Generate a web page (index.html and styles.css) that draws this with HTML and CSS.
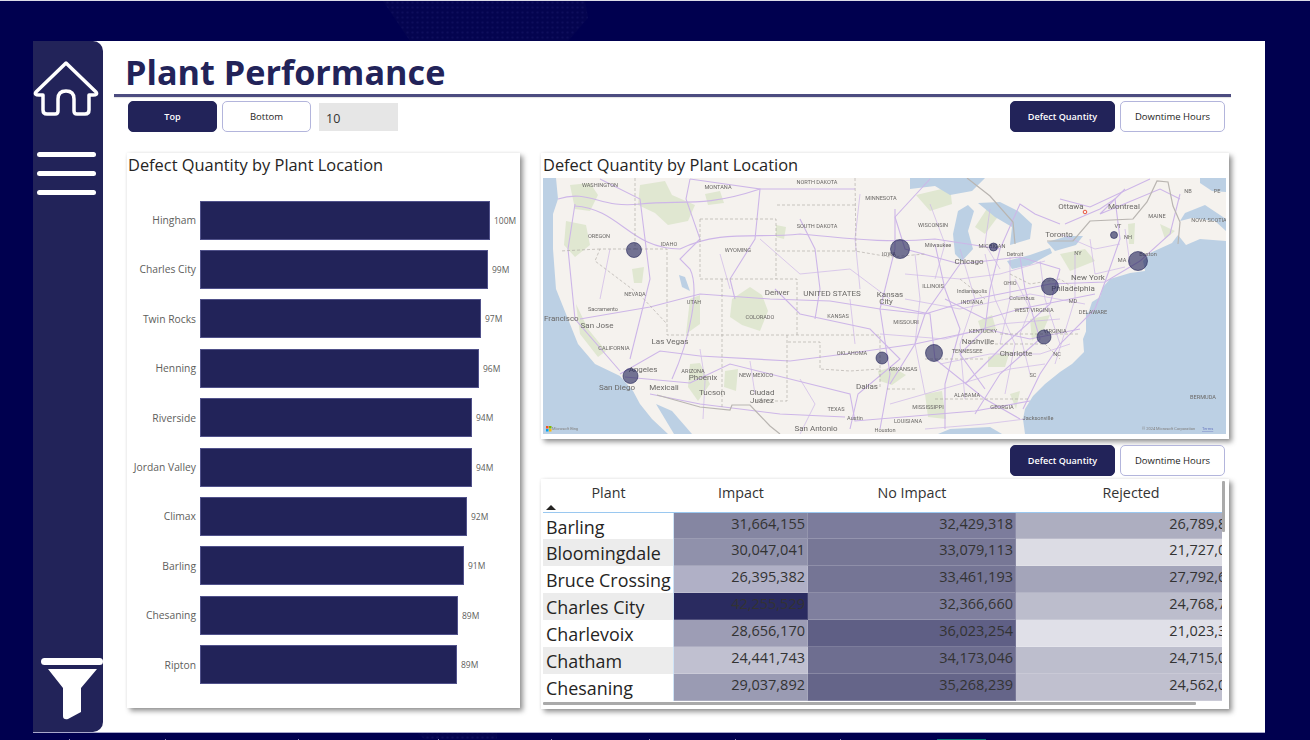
FILE: index.html
```html
<!DOCTYPE html>
<html lang="en">
<head>
<meta charset="utf-8">
<title>Plant Performance</title>
<link rel="stylesheet" href="styles.css">
</head>
<body>
<svg class="backdrop" viewBox="0 0 1310 740">
  <defs><pattern id="dots" width="5" height="5" patternUnits="userSpaceOnUse"><rect width="5" height="5" fill="#04044f"/><circle cx="2.500" cy="2.500" r="1.100" fill="#0e0e5c"/></pattern></defs>
  <path d="M383 1 H585 L588 18 L568 41 H410 Z" fill="url(#dots)"/>
  <path d="M418 733 H497 V739 H424 Z" fill="url(#dots)"/>
</svg>
<div class="floorline"></div>
<div class="canvas">
  <aside class="rail">
    <svg class="ico-home" viewBox="0 0 66 56"><path d="M33 2 L63 31 Q65 34 60 34 H56 V49 Q56 53 52 53 H44 Q41 53 41 50 V38 Q41 30 33 30 Q25 30 25 38 V50 Q25 53 22 53 H14 Q10 53 10 49 V34 H6 Q1 34 3 31 Z"/></svg>
    <div class="burger"><span></span><span></span><span></span></div>
    <svg class="ico-filter" viewBox="0 0 62 62"><rect x="0" y="0" width="62" height="7" rx="3.500" class="lid"/><path d="M7 11 H56 L40 30 V54 L27 61 Q22 62 22 58 V30 Z" class="cone"/></svg>
  </aside>
  <main class="main">
    <h1 class="title">Plant Performance</h1>
    <div class="rule"></div>
    <div class="toolbar">
      <div class="group">
        <button class="btn on wide">Top</button>
        <button class="btn wide">Bottom</button>
        <div class="topn">10</div>
      </div>
      <div class="group">
        <button class="btn on">Defect Quantity</button>
        <button class="btn">Downtime Hours</button>
      </div>
    </div>
    <div class="content">
      <section class="card barcard">
        <h2 class="card-title">Defect Quantity by Plant Location</h2>
        <div class="bars">
          <div class="bar-row"><span class="bar-label">Hingham</span><div class="bar" style="width:290px"></div><span class="bar-value">100M</span></div>
          <div class="bar-row"><span class="bar-label">Charles City</span><div class="bar" style="width:288px"></div><span class="bar-value">99M</span></div>
          <div class="bar-row"><span class="bar-label">Twin Rocks</span><div class="bar" style="width:281px"></div><span class="bar-value">97M</span></div>
          <div class="bar-row"><span class="bar-label">Henning</span><div class="bar" style="width:279px"></div><span class="bar-value">96M</span></div>
          <div class="bar-row"><span class="bar-label">Riverside</span><div class="bar" style="width:272px"></div><span class="bar-value">94M</span></div>
          <div class="bar-row"><span class="bar-label">Jordan Valley</span><div class="bar" style="width:272px"></div><span class="bar-value">94M</span></div>
          <div class="bar-row"><span class="bar-label">Climax</span><div class="bar" style="width:267px"></div><span class="bar-value">92M</span></div>
          <div class="bar-row"><span class="bar-label">Barling</span><div class="bar" style="width:264px"></div><span class="bar-value">91M</span></div>
          <div class="bar-row"><span class="bar-label">Chesaning</span><div class="bar" style="width:258px"></div><span class="bar-value">89M</span></div>
          <div class="bar-row"><span class="bar-label">Ripton</span><div class="bar" style="width:257px"></div><span class="bar-value">89M</span></div>
        </div>
      </section>
      <div class="rightcol">
        <section class="card mapcard">
          <h2 class="card-title flush">Defect Quantity by Plant Location</h2>
          <svg class="map" viewBox="543 179 683 256" preserveAspectRatio="none">
            <rect class="land" x="543" y="179" width="683" height="256"/>
            <g class="green">
              <path d="M570 186 L590 184 L598 196 L590 212 L575 210 Z"/>
              <path d="M640 186 L665 182 L672 196 L695 206 L688 222 L668 226 L655 214 L638 206 Z"/>
              <path d="M566 222 L586 226 L590 246 L575 258 L564 246 Z"/>
              <path d="M705 195 L720 192 L724 204 L708 206 Z"/>
              <path d="M776 226 L786 228 L784 240 L776 238 Z"/>
              <path d="M732 300 L750 288 L762 296 L768 312 L760 332 L742 326 L730 318 Z"/>
              <path d="M576 305 L588 330 L606 352 L598 358 L580 335 Z"/>
              <path d="M690 365 L700 364 L710 385 L698 402 L688 388 Z"/>
              <path d="M725 372 L738 370 L736 392 L724 388 Z"/>
              <path d="M632 270 L644 268 L642 284 L634 284 Z"/>
              <path d="M690 300 L700 296 L700 325 L686 335 Z"/>
              <path d="M990 205 L1000 215 L985 235 L975 228 Z"/>
              <path d="M916 196 L950 188 L952 205 L930 212 Z"/>
              <path d="M1030 320 L1050 316 L1044 330 L1032 342 Z"/>
              <path d="M988 358 L1010 352 L1005 368 L988 368 Z"/>
              <path d="M978 322 L992 316 L996 330 L982 334 Z"/>
              <path d="M925 395 L942 392 L946 420 L928 418 Z"/>
              <path d="M1128 225 L1135 224 L1134 245 L1129 245 Z"/>
              <path d="M1175 232 L1165 240 L1160 225 Z"/>
              <path d="M1010 395 L1020 392 L1016 410 Z"/>
              <path d="M878 372 L892 368 L906 376 L892 386 L880 382 Z"/>
              <path d="M1060 255 L1085 250 L1095 262 L1070 272 Z"/>
            </g>
            <g class="water">
              <path d="M543 179 H556 L558 200 L553 215 L553 250 L556 290 L570 325 L578 345 L595 365 L620 377 L633 392 L640 405 L652 420 L668 435 H543 Z"/>
              <path d="M656 405 L672 412 L692 435 L674 435 Z"/>
              <path d="M1226 242 L1200 240 L1186 246 L1178 236 L1172 244 L1150 254 L1143 262 L1145 272 L1130 274 L1110 280 L1103 288 L1100 298 L1092 303 L1088 315 L1087 330 L1083 340 L1084 353 L1072 365 L1060 373 L1045 385 L1033 397 L1025 410 L1023 420 L1025 435 H1226 Z"/>
              <path d="M1180 222 L1192 219 L1215 222 L1226 232 V220 L1205 206 L1185 214 Z"/>
              <path d="M1200 179 H1226 V193 L1212 192 L1200 184 Z"/>
              <path d="M938 435 L950 430 L990 428 L1002 435 Z"/>
              <path d="M910 179 H985 L972 192 L950 196 L935 187 L910 190 Z"/>
              <path d="M958 212 L968 206 L974 212 L968 232 L973 250 L962 262 L955 255 L953 235 Z"/>
              <path d="M978 204 L1000 203 L1018 212 L1032 225 L1030 240 L1010 246 L1012 228 L995 218 Z"/>
              <path d="M1007 262 L1030 256 L1050 249 L1052 254 L1030 266 L1012 270 Z"/>
              <path d="M1047 243 L1068 237 L1083 237 L1076 246 L1055 252 Z"/>
              <path d="M1086 312 L1092 318 L1090 340 L1086 335 Z"/>
              <path d="M679 276 L685 278 L690 292 L682 288 Z"/>
            </g>
            <g class="roads">
              <path d="M558 200 C590 190 600 210 640 205 C680 200 700 210 760 190 L855 190"/>
              <path d="M575 205 L568 250 L575 320 L620 372"/>
              <path d="M575 207 C620 210 630 250 680 250 C720 230 760 240 800 235 C840 238 880 245 935 240 L1000 250"/>
              <path d="M690 180 L686 200 L700 240 L680 260 L690 270 C700 290 690 340 672 380"/>
              <path d="M895 210 L895 250 L880 310 L890 375 L880 430"/>
              <path d="M895 218 L905 250 L960 265 L1020 258 L1060 270"/>
              <path d="M895 218 L930 180"/>
              <path d="M580 320 L650 308 L700 295 L770 300 L830 302 L880 310 L925 315 L975 300 L1050 285 L1105 283 L1140 262"/>
              <path d="M620 375 L660 352 L700 357 L790 362 L845 355 L915 345 L985 330 L1030 340 L1080 330"/>
              <path d="M625 378 L690 384 L730 365 L850 395 L855 422 L975 412 L1030 402"/>
              <path d="M650 395 L700 405 L780 415 L845 418"/>
              <path d="M775 290 L800 315 L870 330 L900 360 L858 395 L850 430"/>
              <path d="M880 305 L930 315 L935 360 L985 400 L1020 420"/>
              <path d="M1000 250 L990 290 L985 330 L960 355 L985 390"/>
              <path d="M1020 258 L1025 290 L1040 340 L1000 375 L975 415"/>
              <path d="M1105 283 L1095 310 L1060 345 L1040 375 L1023 410"/>
              <path d="M1105 283 L1120 240 L1115 200 L1100 210 L1065 225"/>
              <path d="M1125 190 L1100 215 L1160 190 L1180 200"/>
              <path d="M1060 270 L1050 305 L1005 345 L985 365 L965 385"/>
              <path d="M815 320 L820 290 L815 250 L800 220"/>
              <path d="M960 265 L925 315 L915 345 L890 385"/>
              <path d="M945 300 L985 320 L1020 310 L1095 295"/>
              <path d="M935 245 L945 290 L960 330 L945 385 L945 430"/>
              <path d="M1000 250 L1020 205 L1035 215 L1060 225"/>
              <path d="M1140 262 L1170 235 L1180 195"/>
              <path d="M1060 200 L1090 208 L1150 180"/>
              <path d="M600 180 L640 200 L650 280 L630 360"/>
              <path d="M690 180 L760 190 L755 240 L730 280 L735 300"/>
            </g>
            <g class="roads fine">
              <path d="M915 255 L920 300 L915 345 L925 395"/><path d="M960 250 L975 300 L960 345 L965 400"/><path d="M985 255 L995 300 L1015 345 L1005 395"/>
              <path d="M1010 258 L1010 300 L1000 345"/><path d="M1040 262 L1045 300 L1060 345"/><path d="M1075 255 L1075 300 L1055 365"/>
              <path d="M905 275 L960 280 L1000 275 L1045 262"/><path d="M880 335 L945 340 L1000 325 L1060 320"/><path d="M890 405 L960 385 L1010 370 L1045 365"/>
              <path d="M925 430 L985 425 L1025 420"/><path d="M940 365 L990 355 L1040 355 L1070 345"/><path d="M905 300 L960 310 L1030 295 L1085 305"/>
              <path d="M1090 240 L1095 275 L1125 268"/><path d="M1125 230 L1130 265"/><path d="M1060 235 L1095 250 L1120 245"/>
              <path d="M990 210 L985 245 L1000 270"/><path d="M1015 280 L1030 310 L1020 335 L1030 375"/><path d="M930 205 L945 245 L935 280"/>
              <path d="M800 380 L815 405 L800 435"/><path d="M750 362 L755 395"/><path d="M850 300 L855 345"/><path d="M760 240 L800 275 L850 270 L890 300"/>
              <path d="M700 350 L705 382 L703 420"/><path d="M610 250 L600 300"/><path d="M720 255 L730 290"/><path d="M860 195 L855 240 L860 290"/>
            </g>
            <g class="states">
              <path d="M700 220 H776 V280 M700 220 V280 H797 V336 M667 270 V336 H880 M722 280 V410 M787 336 V402 H753"/>
              <path d="M635 179 V250 L600 250 L595 262 L640 296 L667 325 M635 250 H667 V270 M600 250 L560 252"/>
              <path d="M777 206 H855 M777 252 H855 L890 258 L925 255 M855 179 L856 252"/>
              <path d="M788 343 H820 V370 L850 372 L880 370 V337 M887 390 H917 M880 370 V390"/>
              <path d="M1010 275 L1030 285 L1060 280 L1075 290 M960 280 L985 300 M985 345 L1045 345 L1060 360"/>
              <path d="M1000 335 H1080 M925 360 L985 360 M935 400 L1030 400"/>
            </g>
            <g class="border">
              <path d="M657 396 L700 408 L730 411 L732 406 L750 406 L770 427 L780 435"/>
              <path d="M967 179 L990 197 L1013 223 L1015 245 M1047 242 L1073 242 L1090 222 L1133 220 L1147 203 L1157 182 L1168 183 L1173 207 L1180 223 L1178 245"/>
            </g>
            <g class="lbl">
              <text x="600" y="188" text-anchor="middle">WASHINGTON</text><text x="718" y="190" text-anchor="middle">MONTANA</text><text x="817" y="185" text-anchor="middle">NORTH DAKOTA</text>
              <text x="881" y="201" text-anchor="middle">MINNESOTA</text><text x="817" y="229" text-anchor="middle">SOUTH DAKOTA</text><text x="738" y="253" text-anchor="middle">WYOMING</text>
              <text x="599" y="239" text-anchor="middle">OREGON</text><text x="669" y="247" text-anchor="middle">IDAHO</text><text x="635" y="297" text-anchor="middle">NEVADA</text>
              <text x="694" y="305" text-anchor="middle">UTAH</text><text x="760" y="320" text-anchor="middle">COLORADO</text><text x="838" y="319" text-anchor="middle">KANSAS</text>
              <text x="614" y="351" text-anchor="middle">CALIFORNIA</text><text x="693" y="374" text-anchor="middle">ARIZONA</text><text x="756" y="378" text-anchor="middle">NEW MEXICO</text>
              <text x="852" y="356" text-anchor="middle">OKLAHOMA</text><text x="903" y="372" text-anchor="middle">ARKANSAS</text><text x="906" y="325" text-anchor="middle">MISSOURI</text>
              <text x="836" y="412" text-anchor="middle">TEXAS</text><text x="928" y="410" text-anchor="middle">MISSISSIPPI</text><text x="908" y="424" text-anchor="middle">LOUISIANA</text>
              <text x="983" y="334" text-anchor="middle">KENTUCKY</text><text x="967" y="354" text-anchor="middle">TENNESSEE</text><text x="933" y="289" text-anchor="middle">ILLINOIS</text>
              <text x="933" y="228" text-anchor="middle">WISCONSIN</text><text x="992" y="249" text-anchor="middle">MICHIGAN</text><text x="1010" y="286" text-anchor="middle">OHIO</text>
              <text x="1034" y="313" text-anchor="middle">WEST VIRGINIA</text><text x="972" y="305" text-anchor="middle">INDIANA</text><text x="1055" y="334" text-anchor="middle">VIRGINIA</text>
              <text x="967" y="398" text-anchor="middle">ALABAMA</text><text x="1002" y="410" text-anchor="middle">GEORGIA</text><text x="1157" y="219" text-anchor="middle">MAINE</text>
              <text x="1093" y="315" text-anchor="middle">DELAWARE</text><text x="1209" y="223" text-anchor="middle">NOVA SCOTIA</text><text x="1188" y="194" text-anchor="middle">NB</text>
              <text x="1217" y="194" text-anchor="middle">PE</text><text x="1057" y="357" text-anchor="middle">NC</text><text x="1033" y="378" text-anchor="middle">SC</text>
              <text x="1073" y="304" text-anchor="middle">MD</text><text x="1128" y="240" text-anchor="middle">NH</text><text x="1118" y="229" text-anchor="middle">VT</text>
              <text x="1078" y="256" text-anchor="middle">NY</text><text x="1122" y="263" text-anchor="middle">MA</text><text x="889" y="257" text-anchor="middle">IOWA</text>
              <text x="1203" y="400" text-anchor="middle">BERMUDA</text>
              <text x="938" y="248" text-anchor="middle">Milwaukee</text><text x="1038" y="421" text-anchor="middle">Jacksonville</text><text x="1022" y="301" text-anchor="middle">Columbus</text>
              <text x="603" y="312" text-anchor="middle">Sacramento</text><text x="972" y="294" text-anchor="middle">Indianapolis</text><text x="1015" y="257" text-anchor="middle">Detroit</text>
              <text x="1148" y="257" text-anchor="middle">Boston</text><text x="855" y="421" text-anchor="middle">Austin</text><text x="885" y="433" text-anchor="middle">Houston</text>
            </g>
            <g class="lbl big">
              <text x="832" y="297" text-anchor="middle">UNITED STATES</text><text x="969" y="265" text-anchor="middle">Chicago</text><text x="1071" y="210" text-anchor="middle">Ottawa</text>
              <text x="1124" y="210" text-anchor="middle">Montreal</text><text x="1059" y="238" text-anchor="middle">Toronto</text>
              <text x="1088" y="281" text-anchor="middle">New York</text><text x="1073" y="292" text-anchor="middle">Philadelphia</text><text x="777" y="296" text-anchor="middle">Denver</text>
              <text x="597" y="329" text-anchor="middle">San Jose</text><text x="544" y="322">Francisco</text><text x="670" y="345" text-anchor="middle">Las Vegas</text>
              <text x="643" y="373" text-anchor="middle">Angeles</text><text x="617" y="391" text-anchor="middle">San Diego</text><text x="664" y="391" text-anchor="middle">Mexicali</text>
              <text x="703" y="381" text-anchor="middle">Phoenix</text><text x="712" y="396" text-anchor="middle">Tucson</text><text x="762" y="396" text-anchor="middle">Ciudad</text>
              <text x="762" y="404" text-anchor="middle">Juárez</text><text x="867" y="390" text-anchor="middle">Dallas</text><text x="816" y="432" text-anchor="middle">San Antonio</text>
              <text x="978" y="345" text-anchor="middle">Nashville</text><text x="1016" y="357" text-anchor="middle">Charlotte</text><text x="890" y="298" text-anchor="middle">Kansas</text><text x="886" y="305" text-anchor="middle">City</text>
            </g>
            <g class="bubbles">
              <circle cx="634" cy="251" r="7.500"/><circle cx="900" cy="250" r="9.500"/><circle cx="993.500" cy="248" r="4"/><circle cx="1114" cy="236" r="3.500"/>
              <circle cx="1138" cy="262" r="9.500"/><circle cx="1050" cy="287.500" r="8.500"/><circle cx="1044" cy="338" r="7"/><circle cx="934" cy="354" r="8.500"/>
              <circle cx="882" cy="359" r="6"/><circle cx="630.500" cy="377" r="7.500"/>
            </g>
            <circle class="pin" cx="1085" cy="213" r="1.800"/>
            <rect x="546" y="427" width="2.500" height="2.500" fill="#f25022"/><rect x="549" y="427" width="2.500" height="2.500" fill="#7fba00"/>
            <rect x="546" y="430" width="2.500" height="2.500" fill="#00a4ef"/><rect x="549" y="430" width="2.500" height="2.500" fill="#ffb900"/>
            <text class="lbl tiny" x="552" y="431">Microsoft Bing</text>
            <text class="lbl tiny" x="1142" y="431">© 2024 Microsoft Corporation</text>
            <text class="lbl tiny link" x="1202" y="431">Terms</text>
          </svg>
        </section>
        <div class="subbar">
          <button class="btn on">Defect Quantity</button>
          <button class="btn">Downtime Hours</button>
        </div>
        <section class="card tablecard">
          <div class="tablewrap">
            <div class="thead">
              <div class="th plant">Plant<i class="sort"></i></div>
              <div class="th c1">Impact</div>
              <div class="th c2">No Impact</div>
              <div class="th c3">Rejected</div>
            </div>
            <div class="trow"><div class="td name">Barling</div><div class="td c1" style="background:#8586a2">31,664,155</div><div class="td c2" style="background:#7c7c9c">32,429,318</div><div class="td c3" style="background:#adaec0">26,789,851</div></div>
            <div class="trow alt"><div class="td name">Bloomingdale</div><div class="td c1" style="background:#9091ab">30,047,041</div><div class="td c2" style="background:#777796">33,079,113</div><div class="td c3" style="background:#dcdce4">21,727,047</div></div>
            <div class="trow"><div class="td name">Bruce Crossing</div><div class="td c1" style="background:#b0b0c6">26,395,382</div><div class="td c2" style="background:#757595">33,461,193</div><div class="td c3" style="background:#a4a5ba">27,792,650</div></div>
            <div class="trow alt"><div class="td name">Charles City</div><div class="td c1" style="background:#2a2b60">42,255,529</div><div class="td c2" style="background:#7f7f9e">32,366,660</div><div class="td c3" style="background:#bcbdcc">24,768,712</div></div>
            <div class="trow"><div class="td name">Charlevoix</div><div class="td c1" style="background:#9d9db5">28,656,170</div><div class="td c2" style="background:#5f5f85">36,023,254</div><div class="td c3" style="background:#e0e0e8">21,023,350</div></div>
            <div class="trow alt"><div class="td name">Chatham</div><div class="td c1" style="background:#c0c0d0">24,441,743</div><div class="td c2" style="background:#6e6e90">34,173,046</div><div class="td c3" style="background:#bdbecd">24,715,041</div></div>
            <div class="trow"><div class="td name">Chesaning</div><div class="td c1" style="background:#9a9bb3">29,037,892</div><div class="td c2" style="background:#656589">35,268,239</div><div class="td c3" style="background:#c0c0cf">24,562,039</div></div>
          </div>
          <div class="hscroll"></div>
          <div class="vscroll"></div>
        </section>
      </div>
    </div>
  </main>
</div>
</body>
</html>
```

FILE: styles.css
```css
* { box-sizing: border-box; }
html, body { margin: 0; height: 100%; overflow: hidden; }
body {
  position: relative;
  background: #00004f;
  font-family: "Open Sans", "Noto Sans", sans-serif;
  color: #252423;
  padding: 41px 45px 7px 33px;
}
body::before { content: ""; position: absolute; left: 0; right: 0; top: 0; height: 1px; background: #dcdce8; }
.backdrop { position: absolute; left: 0; top: 0; width: 1310px; height: 740px; }
.floorline {
  position: absolute;
  left: 0;
  top: 739px;
  width: 1310px;
  height: 1px;
  background:
    linear-gradient(#0f7a78, #0f7a78) 937px 0 / 49px 1px no-repeat,
    linear-gradient(#8c8cb4, #8c8cb4) 69px 0 / 1px 1px no-repeat,
    linear-gradient(#8c8cb4, #8c8cb4) 165px 0 / 1px 1px no-repeat,
    linear-gradient(#8c8cb4, #8c8cb4) 298px 0 / 1px 1px no-repeat,
    linear-gradient(#8c8cb4, #8c8cb4) 438px 0 / 1px 1px no-repeat,
    linear-gradient(#8c8cb4, #8c8cb4) 551px 0 / 1px 1px no-repeat,
    linear-gradient(#8c8cb4, #8c8cb4) 649px 0 / 1px 1px no-repeat,
    linear-gradient(#8c8cb4, #8c8cb4) 735px 0 / 1px 1px no-repeat,
    linear-gradient(#8c8cb4, #8c8cb4) 840px 0 / 1px 1px no-repeat;
}
.canvas { position: relative; display: flex; height: 692px; background: #fff; border-bottom: 1px solid #a8a8cc; }
.rail {
  width: 70px;
  flex: none;
  background: #222359;
  border-radius: 0 10px 10px 0;
  display: flex;
  flex-direction: column;
  align-items: flex-start;
}
.ico-home { width: 66px; height: 56px; margin-top: 20px; fill: none; stroke: #fff; stroke-width: 3.5; stroke-linejoin: round; }
.burger { display: flex; flex-direction: column; gap: 14px; margin: 35px 0 0 4px; }
.burger span { display: block; width: 59px; height: 5px; border-radius: 3px; background: #fff; }
.ico-filter { width: 62px; height: 62px; margin: 463px 0 0 8px; }
.lid, .cone { fill: #fff; }
.main { flex: 1; padding-left: 11px; min-width: 0; }
.title { margin: 9px 0 0 11px; font-size: 34.2px; line-height: 44px; height: 44px; font-weight: 700; color: #222359; white-space: nowrap; }
.rule { width: 1117px; height: 2.5px; background: #4c4c80; box-shadow: 0 1px 1px rgba(0,0,0,.12); }
.toolbar { display: flex; justify-content: space-between; width: 1097px; margin: 4px 0 0 14px; height: 31px; }
.group { display: flex; gap: 5px; align-items: center; }
.btn {
  width: 105px;
  height: 31px;
  border: 1px solid #b3b5dc;
  border-radius: 5px;
  background: #fff;
  color: #252423;
  font: 400 9.5px "Open Sans", sans-serif;
  padding: 0;
}
.btn.wide { width: 89px; }
.btn.on { background: #222359; color: #fff; border-color: #222359; font-weight: 600; font-size: 9.1px; }
.topn { width: 79px; height: 28px; margin: 1px 0 0 3px; background: #e6e6e6; font-size: 12.5px; line-height: 31px; padding-left: 7px; color: #333; }
.content { display: flex; gap: 21px; margin: 21px 0 0 13px; align-items: flex-start; }
.card { background: #fff; box-shadow: 3px 3px 5px rgba(0,0,0,.42), 0 0 3px rgba(0,0,0,.07); }
.card-title { margin: 0; font-size: 16.4px; line-height: 23px; height: 25px; font-weight: 400; color: #252423; padding-left: 1px; white-space: nowrap; }
.card-title.flush { padding-left: 0; }
.barcard { width: 393px; height: 555px; }
.bars { display: grid; grid-auto-rows: 39px; row-gap: 10.42px; margin-top: 23px; }
.bar-row { display: flex; align-items: center; }
.bar-label { width: 69px; margin-right: 4px; text-align: right; font-size: 10.3px; color: #605e5c; white-space: nowrap; flex: none; }
.bar { height: 39px; background: #222359; border: 1px solid #50518a; flex: none; }
.bar-value { margin-left: 4px; font-size: 8.5px; color: #605e5c; }
.rightcol { width: 688px; flex: none; }
.mapcard { height: 286px; padding: 0 3px 4px 2px; }
.map { display: block; width: 683px; height: 256px; overflow: hidden; filter: blur(.35px); }
.land { fill: #f5f2ee; }
.green path { fill: #e0e7d1; }
.water path { fill: #bcd0e4; }
.roads path { fill: none; stroke: #cdb6e8; stroke-width: 1.1; }
.roads.fine path { stroke-width: .7; }
.states path { fill: none; stroke: #a9a5a0; stroke-width: .6; stroke-dasharray: 3 2; }
.border path { fill: none; stroke: #b9b5b1; stroke-width: 1.2; }
.lbl text, text.lbl { font-family: Roboto, sans-serif; font-size: 5.6px; fill: #6b6967; }
.lbl.big text { font-size: 8px; fill: #6a6866; }
text.tiny { font-size: 4px; fill: #807e7c; }
text.link { fill: #6a78c0; text-decoration: underline; }
.bubbles circle { fill: rgba(34,35,89,.62); stroke: rgba(34,35,89,.75); stroke-width: .8; }
.pin { fill: none; stroke: #e8452c; stroke-width: .9; }
.subbar { display: flex; gap: 5px; justify-content: flex-end; height: 31px; margin-top: 6px; padding-right: 4px; }
.tablecard { position: relative; height: 230px; margin-top: 3px; padding: 0 7px 0 2px; }
.tablewrap { height: 224px; overflow: hidden; }
.thead, .trow { display: grid; grid-template-columns: 131px 134px 208px 230px; width: 703px; }
.thead { height: 34px; border-bottom: 1.5px solid #9ac8f0; }
.th { font-size: 14.3px; line-height: 27px; text-align: center; color: #333; position: relative; }
.sort { position: absolute; left: 3px; top: 26px; width: 0; height: 0; border: 5px solid transparent; border-top: 0; border-bottom: 5px solid #252423; }
.trow { height: 26.9px; }
.alt .name { background: #ececec; }
.td { font-size: 14.5px; line-height: 22px; height: 26.9px; text-align: right; padding-right: 2px; color: #333; border-bottom: 1px solid rgba(255,255,255,.18); border-right: 1px solid rgba(255,255,255,.12); white-space: nowrap; }
.td.name { text-align: left; font-size: 17.9px; line-height: 29.4px; padding-left: 3px; border-right: 1px solid #cfe4f7; border-bottom: 0; color: #252423; }
.hscroll { position: absolute; left: 2px; top: 223px; width: 653px; height: 3px; background: #aaa; border-radius: 1px; }
.vscroll { position: absolute; left: 681px; top: 2px; width: 3px; height: 51px; background: #aaa; border-radius: 1px; }
```
